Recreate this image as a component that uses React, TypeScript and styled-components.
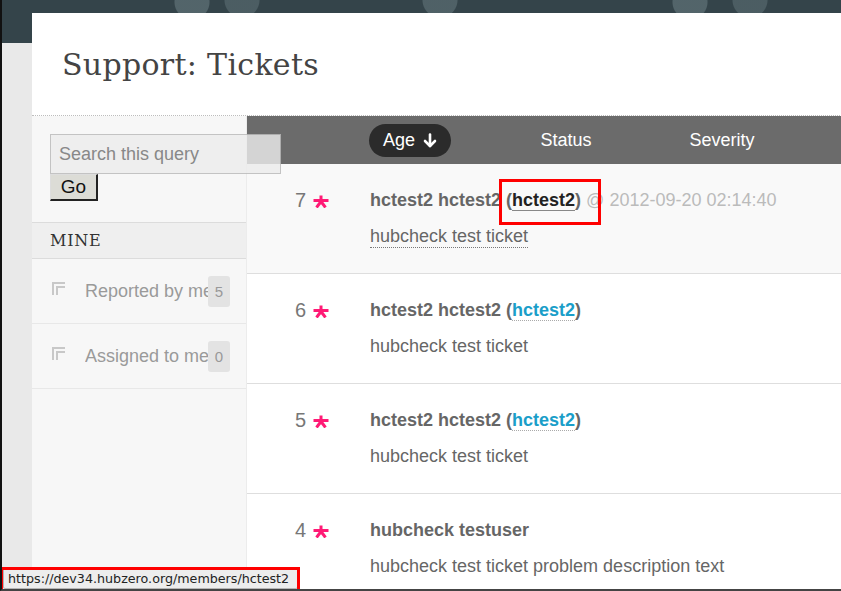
import { createGlobalStyle } from "styled-components";
import styled from "styled-components";

const GlobalStyle = createGlobalStyle`
  html, body {
    margin: 0;
    padding: 0;
    background: #ebebeb;
  }
  * {
    box-sizing: border-box;
  }
`;

const Page = styled.div`
  position: relative;
  width: 841px;
  height: 591px;
  overflow: hidden;
  padding: 13px 0 0 30px;
  border-left: 2px solid #111;
  border-bottom: 2px solid #444;
  font-family: "Liberation Sans", Arial, sans-serif;
  background:
    radial-gradient(circle at 190px 2px, rgba(120, 140, 145, 0.45) 0 17px, transparent 18px),
    radial-gradient(circle at 240px 0px, rgba(120, 140, 145, 0.35) 0 17px, transparent 18px),
    radial-gradient(circle at 438px 0px, rgba(120, 140, 145, 0.4) 0 17px, transparent 18px),
    radial-gradient(circle at 688px 2px, rgba(120, 140, 145, 0.45) 0 17px, transparent 18px),
    radial-gradient(circle at 748px 0px, rgba(120, 140, 145, 0.35) 0 17px, transparent 18px),
    linear-gradient(#34444a 0 43px, #e9e9e9 43px);
`;

const Panel = styled.div`
  width: 820px;
  height: 100%;
  background: #fff;
  display: flex;
  flex-direction: column;
`;

const TitleBar = styled.header`
  height: 103px;
  padding: 32px 0 0 30px;
  border-bottom: 1px dotted #bdbdbd;
`;

const Title = styled.h1`
  margin: 0;
  font-family: "DejaVu Serif", "Liberation Serif", serif;
  font-weight: normal;
  font-size: 30px;
  line-height: 40px;
  color: #444;
  letter-spacing: 0.3px;
`;

const Body = styled.div`
  flex: 1;
  display: grid;
  grid-template-columns: 215px 1fr;
  min-height: 0;
`;

const Sidebar = styled.aside`
  position: relative;
  z-index: 2;
  background: #f7f7f7;
  border-right: 1px solid #ececec;
  padding-top: 18px;
`;

const SearchForm = styled.form`
  padding-left: 18px;
  display: flex;
  flex-direction: column;
  align-items: flex-start;
  margin-bottom: 21px;
`;

const SearchInput = styled.input`
  width: 231px;
  height: 40px;
  padding: 0 8px;
  border: 1px solid rgba(0, 0, 0, 0.18);
  background: rgba(236, 236, 236, 0.82);
  font-family: "Liberation Sans", Arial, sans-serif;
  font-size: 18px;
  color: #333;
  outline: none;
  &::placeholder {
    color: #888;
  }
`;

const GoButton = styled.button`
  width: 48px;
  height: 27px;
  padding: 0;
  background: #dcdcd6;
  border: 1px solid #777;
  border-top-color: #ddd;
  border-left-color: #ddd;
  border-right: 2px solid #222;
  border-bottom: 2px solid #222;
  font-family: "Liberation Sans", Arial, sans-serif;
  font-size: 19px;
  color: #111;
`;

const SectionHead = styled.h3`
  margin: 0;
  height: 37px;
  padding: 8px 0 0 18px;
  background: #efefef;
  border-top: 1px solid #dcdcdc;
  border-bottom: 1px solid #dcdcdc;
  font-family: "DejaVu Serif", "Liberation Serif", serif;
  font-weight: normal;
  font-size: 16px;
  letter-spacing: 0.8px;
  color: #333;
`;

const NavItem = styled.a`
  height: 65px;
  display: grid;
  grid-template-columns: 20px 33px 123px 22px;
  align-items: center;
  border-bottom: 1px solid #e8e8e8;
  color: #9a9a9a;
  text-decoration: none;
`;

const NavIcon = styled.svg`
  grid-column: 2;
  width: 14px;
  height: 14px;
  margin-top: -4px;
`;

const NavLabel = styled.span`
  font-size: 18px;
  white-space: nowrap;
  overflow: hidden;
`;

const Badge = styled.span`
  height: 31px;
  display: flex;
  align-items: center;
  justify-content: center;
  border-radius: 3px;
  background: #e3e3e3;
  color: #999;
  font-size: 15px;
`;

const Main = styled.main`
  background: #fff;
  min-width: 0;
`;

const SortBar = styled.div`
  height: 48px;
  background: #6b6b6b;
  display: grid;
  grid-template-columns: repeat(3, 156px);
  padding-left: 85px;
  align-items: center;
  justify-items: center;
  color: #fff;
  font-size: 18px;
`;

const SortPill = styled.span<{ $active?: boolean }>`
  display: inline-flex;
  align-items: center;
  gap: 8px;
  height: 33px;
  padding: 0 14px;
  border-radius: 17px;
  background: ${(p) => (p.$active ? "#2b2b2b" : "transparent")};
`;

const Row = styled.div<{ $hover?: boolean }>`
  height: 110px;
  display: grid;
  grid-template-columns: 59px 64px 1fr;
  align-items: start;
  padding-top: 25px;
  background: ${(p) => (p.$hover ? "#f9f9f9" : "#fff")};
  border-bottom: 1px solid #dedede;
`;

const Num = styled.span`
  text-align: right;
  font-size: 20px;
  line-height: 22px;
  color: #777;
`;

const Star = styled.svg`
  width: 16px;
  height: 13px;
  margin: 6px 0 0 7px;
`;

const Info = styled.div`
  display: flex;
  flex-direction: column;
  align-items: flex-start;
`;

const Who = styled.div`
  font-size: 18px;
  line-height: 22px;
  font-weight: bold;
  color: #666;
  white-space: nowrap;
`;

const UserLink = styled.a<{ $hover?: boolean }>`
  color: ${(p) => (p.$hover ? "#222" : "#1a9ec9")};
  text-decoration: none;
  border-bottom: 1px ${(p) => (p.$hover ? "solid #888" : "dotted #aaa")};
`;

const When = styled.span`
  font-weight: normal;
  color: #bbb;
`;

const Summary = styled.a<{ $hover?: boolean }>`
  margin-top: 15px;
  font-size: 18px;
  line-height: 21px;
  color: #666;
  text-decoration: none;
  border-bottom: 1px dotted ${(p) => (p.$hover ? "#777" : "transparent")};
`;

const Highlight = styled.div<{ $x: number; $y: number; $w: number; $h: number }>`
  position: absolute;
  left: ${(p) => p.$x}px;
  top: ${(p) => p.$y}px;
  width: ${(p) => p.$w}px;
  height: ${(p) => p.$h}px;
  border: 3px solid #f00;
  z-index: 5;
`;

const StatusTip = styled.div`
  position: absolute;
  left: 1px;
  bottom: 0px;
  width: 295px;
  height: 21px;
  padding: 1px 0 0 4px;
  background: #ededed;
  border: 1px solid #b5b5b5;
  border-radius: 2px;
  font-family: "DejaVu Sans", sans-serif;
  font-size: 12.7px;
  line-height: 18px;
  color: #222;
  white-space: nowrap;
  z-index: 4;
`;

const CornerIcon = () => (
  <NavIcon viewBox="0 0 14 14" fill="none" stroke="#c8c8c8" strokeWidth="2">
    <path d="M1 13V1H13" />
    <path d="M5 13V5H13" />
  </NavIcon>
);

const Asterisk = () => (
  <Star viewBox="0 0 16 13" stroke="#ff1a75" strokeWidth="3" strokeLinecap="butt">
    <path d="M8 0.5V6.5" />
    <path d="M0.5 5.5H15.5" />
    <path d="M8 6.5L3.5 12.5" />
    <path d="M8 6.5L12.5 12.5" />
  </Star>
);

const ArrowDown = () => (
  <svg width="14" height="15" viewBox="0 0 14 15" fill="none" stroke="#fff" strokeWidth="2.6" strokeLinecap="round" strokeLinejoin="round">
    <path d="M7 1.5V13" />
    <path d="M2 8L7 13L12 8" />
  </svg>
);

type Ticket = {
  id: number;
  name: string;
  user?: string;
  date?: string;
  summary: string;
};

const tickets: Ticket[] = [
  { id: 7, name: "hctest2 hctest2", user: "hctest2", date: "2012-09-20 02:14:40", summary: "hubcheck test ticket" },
  { id: 6, name: "hctest2 hctest2", user: "hctest2", summary: "hubcheck test ticket" },
  { id: 5, name: "hctest2 hctest2", user: "hctest2", summary: "hubcheck test ticket" },
  { id: 4, name: "hubcheck testuser", summary: "hubcheck test ticket problem description text" },
];

export default function App() {
  return (
    <>
      <GlobalStyle />
      <Page>
        <Panel>
          <TitleBar>
            <Title>Support: Tickets</Title>
          </TitleBar>
          <Body>
            <Sidebar>
              <SearchForm onSubmit={(e) => e.preventDefault()}>
                <SearchInput placeholder="Search this query" />
                <GoButton type="submit">Go</GoButton>
              </SearchForm>
              <SectionHead>MINE</SectionHead>
              <NavItem href="#">
                <CornerIcon />
                <NavLabel>Reported by me</NavLabel>
                <Badge>5</Badge>
              </NavItem>
              <NavItem href="#">
                <CornerIcon />
                <NavLabel>Assigned to me</NavLabel>
                <Badge>0</Badge>
              </NavItem>
            </Sidebar>
            <Main>
              <SortBar>
                <SortPill $active>
                  Age <ArrowDown />
                </SortPill>
                <SortPill>Status</SortPill>
                <SortPill>Severity</SortPill>
              </SortBar>
              {tickets.map((t, i) => (
                <Row key={t.id} $hover={i === 0}>
                  <Num>{t.id}</Num>
                  <Asterisk />
                  <Info>
                    <Who>
                      {t.name}
                      {t.user && (
                        <>
                          {" "}(<UserLink href="#" $hover={i === 0}>{t.user}</UserLink>)
                        </>
                      )}
                      {t.date && <When> @ {t.date}</When>}
                    </Who>
                    <Summary href="#" $hover={i === 0}>{t.summary}</Summary>
                  </Info>
                </Row>
              ))}
            </Main>
          </Body>
        </Panel>
        <Highlight $x={497} $y={179} $w={102} $h={46} />
        <Highlight $x={-2} $y={567} $w={300} $h={26} />
        <StatusTip>https://dev34.hubzero.org/members/hctest2</StatusTip>
      </Page>
    </>
  );
}
